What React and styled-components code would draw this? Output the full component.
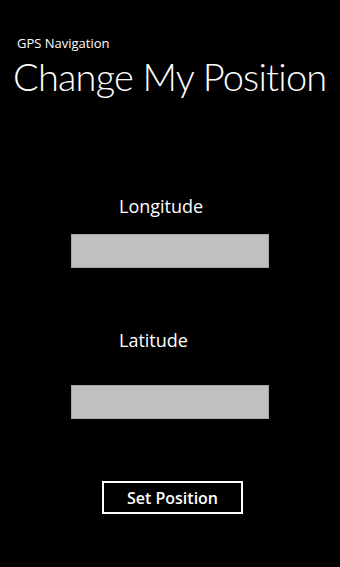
import React from "react";
import styled, { createGlobalStyle } from "styled-components";

const GlobalStyle = createGlobalStyle`
  html, body {
    margin: 0;
    padding: 0;
    background: #000000;
  }
  body {
    font-family: "Open Sans", "Noto Sans", sans-serif;
    color: #ffffff;
  }
`;

const Page = styled.div`
  width: 340px;
  height: 567px;
  background: #000000;
  display: flex;
  flex-direction: column;
  box-sizing: border-box;
  overflow: hidden;
`;

const Header = styled.div`
  padding: 35px 0 0 13px;
  display: flex;
  flex-direction: column;
`;

const AppName = styled.span`
  font-size: 13px;
  line-height: 16px;
  padding-left: 4px;
`;

const Title = styled.h1`
  margin: 0;
  font-family: Lato, "Open Sans", sans-serif;
  font-size: 38px;
  font-weight: 300;
  line-height: 50px;
  letter-spacing: -0.8px;
  white-space: nowrap;
`;

const Form = styled.div`
  display: flex;
  flex-direction: column;
  padding: 0 71px;
  margin-top: 93px;
`;

const Field = styled.div`
  display: flex;
  flex-direction: column;
  margin-bottom: ${(p) => p.gap || 0}px;
`;

const Label = styled.label`
  font-size: 18px;
  line-height: 24px;
  padding-left: 48px;
  margin-bottom: ${(p) => p.space}px;
`;

const Input = styled.input`
  width: 198px;
  height: 34px;
  box-sizing: border-box;
  background: #c0c0c0;
  border: 1px solid #a8a8a8;
  outline: none;
  margin: 0;
`;

const Button = styled.button`
  align-self: flex-start;
  margin-left: 31px;
  width: 141px;
  height: 33px;
  box-sizing: border-box;
  background: transparent;
  border: 2px solid #ffffff;
  color: #ffffff;
  font-family: "Open Sans", "Noto Sans", sans-serif;
  font-size: 16px;
  font-weight: 600;
  padding: 0;
`;

export default function App() {
  return (
    <>
      <GlobalStyle />
      <Page>
        <Header>
          <AppName>GPS Navigation</AppName>
          <Title>Change My Position</Title>
        </Header>
        <Form>
          <Field gap={60}>
            <Label space={16}>Longitude</Label>
            <Input type="text" />
          </Field>
          <Field gap={62}>
            <Label space={33}>Latitude</Label>
            <Input type="text" />
          </Field>
          <Button>Set Position</Button>
        </Form>
      </Page>
    </>
  );
}
